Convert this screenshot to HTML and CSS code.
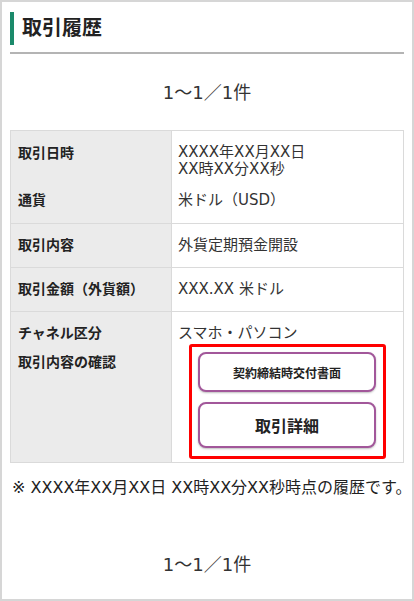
FILE: index.html
```html
<!DOCTYPE html>
<html lang="ja">
<head>
  <meta charset="UTF-8" />
  <meta name="viewport" content="width=device-width, initial-scale=1.0"/>
  <title>取引履歴</title>
  <link rel="stylesheet" href="styles.css">
</head>
<body>

  <div class="frame">
    <h1 class="page-title"><span>取引履歴</span></h1>

    <p class="pager">1～1／1件</p>

    <table class="history">
      <tr class="row-top">
        <th>取引日時</th>
        <td>XXXX年XX月XX日<br>XX時XX分XX秒</td>
      </tr>
      <tr class="row-sub">
        <th>通貨</th>
        <td>米ドル（USD）</td>
      </tr>
      <tr>
        <th>取引内容</th>
        <td>外貨定期預金開設</td>
      </tr>
      <tr>
        <th>取引金額（外貨額）</th>
        <td>XXX.XX 米ドル</td>
      </tr>
      <tr class="row-last">
        <th>
          <div>チャネル区分</div>
          <div class="sub-label">取引内容の確認</div>
        </th>
        <td>
          <div>スマホ・パソコン</div>
          <div class="highlight">
            <button class="doc-btn small">契約締結時交付書面</button>
            <button class="doc-btn large">取引詳細</button>
          </div>
        </td>
      </tr>
    </table>

    <p class="note">※ XXXX年XX月XX日 XX時XX分XX秒時点の履歴です。</p>

    <p class="pager bottom">1～1／1件</p>
  </div>

</body>
</html>
```

FILE: styles.css
```css
body {
  margin: 0;
  font-family: "DejaVu Sans", "Noto Sans CJK JP", sans-serif;
  color: #333;
  background: #fff;
}

.frame {
  box-sizing: border-box;
  height: 601px;
  border: 2px solid #d6d6d6;
  padding: 0 8px;
  overflow: hidden;
}

.page-title {
  margin: 10px 0 0;
  padding-bottom: 7px;
  border-bottom: 2px solid #b4b4b4;
  font-size: 20px;
  font-weight: bold;
  color: #222;
}

.page-title span {
  display: block;
  border-left: 4px solid #1b8a6b;
  padding-left: 8px;
  line-height: 33px;
}

.pager {
  margin: 27px 0 25px;
  text-align: center;
  font-size: 18px;
  line-height: 24px;
  color: #333;
}

.pager.bottom {
  margin-top: 56px;
}

.history {
  width: 100%;
  border-collapse: collapse;
  font-size: 15px;
  line-height: 18px;
}

.history th,
.history td {
  border: 1px solid #dadada;
  padding: 12px 6px 13px;
  vertical-align: top;
  text-align: left;
}

.history th {
  width: 147px;
  background: #ebebeb;
  font-size: 14px;
  font-weight: bold;
  color: #222;
  padding-left: 7px;
}

.history td {
  background: #fff;
}

.row-top th,
.row-top td {
  border-bottom: none;
  padding-top: 13px;
  padding-bottom: 6px;
}

.row-sub th,
.row-sub td {
  border-top: none;
  padding-top: 6px;
  padding-bottom: 14px;
}

.row-top td {
  line-height: 17px;
  padding-bottom: 7px;
}

.row-last th,
.row-last td {
  padding-bottom: 3px;
}

.sub-label {
  margin-top: 11px;
}

.highlight {
  display: flex;
  flex-direction: column;
  gap: 10px;
  width: 197px;
  margin: 2px 0 0 11px;
  padding: 5px 7px 8px 6px;
  border: 3px solid #ff0000;
  border-radius: 3px;
  box-sizing: border-box;
}

.doc-btn {
  font-family: "Noto Sans CJK JP", sans-serif;
  font-weight: bold;
  color: #222;
  background: #fff;
  border: 2px solid #a2579a;
  border-radius: 8px;
  box-shadow: 0 1px 2px rgba(0, 0, 0, 0.25);
  cursor: pointer;
}

.doc-btn.small {
  height: 40px;
  font-size: 12px;
}

.doc-btn.large {
  height: 46px;
  font-size: 16px;
}

.note {
  margin: 16px 0 0 2px;
  font-size: 16px;
  line-height: 18px;
  color: #222;
  white-space: nowrap;
}
```
